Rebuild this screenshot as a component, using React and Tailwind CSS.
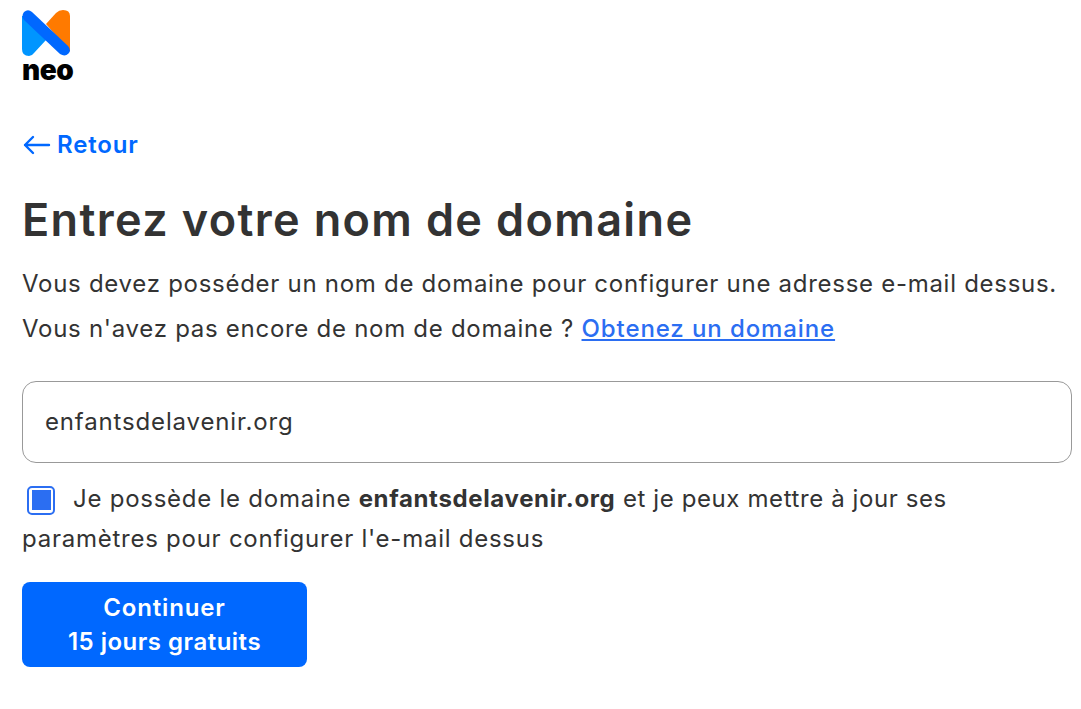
// App.jsx — domain name step of the neo signup
const FONT = "font-['Inter','Open_Sans',sans-serif]";

function NeoLogo() {
  return (
    <div className="flex flex-col items-start">
      <svg width="48" height="46" viewBox="0 0 48 46" className="block">
        <path d="M24 14 L34 3 Q37 0 41 0 Q48 0 48 6 V42 Z" fill="#ff7a00" />
        <path d="M0 6 V39 Q0 46 7 46 Q10 46 12 43 L24 30 L36 30 L12 6 Z" fill="#0095ff" />
        <path d="M2 2 Q6 -1.500 10 2 L46 36 Q49.500 40 46.500 43.500 Q43 47 38 44 L2 10 Q-1 6 2 2Z" fill="#0068ff" />
      </svg>
      <span className="mt-[-1px] text-[28px] leading-[30px] font-black tracking-[-0.4px] text-black">neo</span>
    </div>
  );
}

export default function App() {
  return (
    <div className={`${FONT} min-h-[709px] bg-white pl-[22px] pr-[9px] pt-[10px] text-[#333333]`}>
      <NeoLogo />

      <a className="mt-[43px] flex h-[34px] items-center gap-[6px] text-[24px] font-semibold tracking-[0.85px] text-[#0068ff]">
        <svg width="28" height="20" viewBox="0 0 28 20" fill="none" stroke="#0068ff" strokeWidth="2.4" strokeLinecap="round" strokeLinejoin="round" className="ml-[1px]">
          <path d="M2 10 H26 M10 2 L2 10 L10 18" />
        </svg>
        Retour
      </a>

      <h1 className="mt-[30px] text-[45px] leading-[56px] font-semibold tracking-[1.37px] whitespace-nowrap text-[#333333]">
        Entrez votre nom de domaine
      </h1>

      <p className="mt-[13px] text-[24px] leading-[45px] tracking-[0.72px] whitespace-nowrap">
        Vous devez posséder un nom de domaine pour configurer une adresse e-mail dessus.
        <br />
        Vous n'avez pas encore de nom de domaine ?{" "}
        <a className="font-medium tracking-[0.9px] text-[#2b6ef2] underline">Obtenez un domaine</a>
      </p>

      <div className="mt-[30px] flex h-[82px] items-center rounded-[14px] border border-[#999999] pl-[22px] text-[24px] tracking-[0.85px]">
        enfantsdelavenir.org
      </div>

      <div className="mt-[16px] text-[24px] leading-[40px] tracking-[0.75px] whitespace-nowrap">
        <span className="mr-[18px] ml-[5px] inline-flex h-[29px] w-[28px] translate-y-[3px] items-center justify-center rounded-[5px] border-[2px] border-[#2b6ef2] bg-white">
          <span className="block h-[20px] w-[19px] bg-[#2b6ef2]" />
        </span>
        Je possède le domaine <b className="font-bold tracking-[0.65px]">enfantsdelavenir.org</b>{" "}
        <span className="tracking-[0.6px]">et je peux mettre à jour ses</span>
        <br />
        paramètres pour configurer l'e-mail dessus
      </div>

      <button className="mt-[23px] block h-[85px] w-[285px] rounded-[8px] bg-[#0068ff] text-center text-[24px] leading-[34px] font-semibold tracking-[0.5px] text-white">
        <span className="tracking-[0.85px]">Continuer</span>
        <br />
        15 jours gratuits
      </button>
    </div>
  );
}
